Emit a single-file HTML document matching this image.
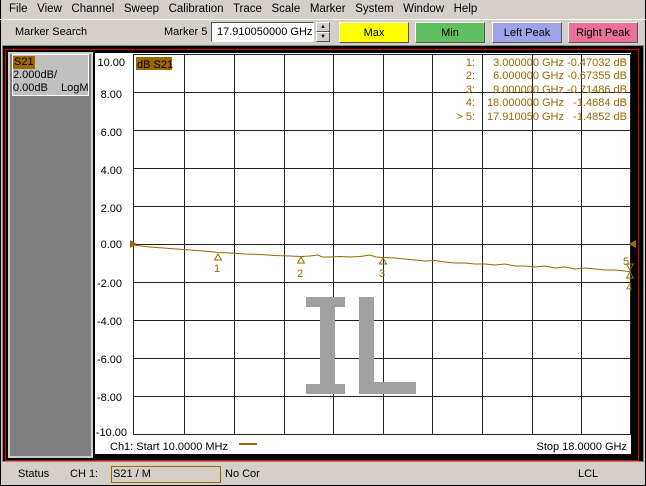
<!DOCTYPE html>
<html><head><meta charset="utf-8"><style>
*{margin:0;padding:0;box-sizing:border-box}
body{width:646px;height:486px;background:#d4d0c8;font-family:"Liberation Sans",sans-serif;font-size:11px;color:#000;position:relative;overflow:hidden}
.a{position:absolute;white-space:nowrap}
.btn{position:absolute;top:22px;height:21px;text-align:center;line-height:20px;border:1px solid;border-color:#fff #555 #555 #fff}
</style></head><body>
<div class="a" style="left:0;top:0;width:646px;height:486px;border:1px solid #000;border-top:none"></div>
<div class="a" style="top:3px;left:9px;font-size:11.5px">File&nbsp;&nbsp; View&nbsp;&nbsp; Channel&nbsp;&nbsp; Sweep&nbsp;&nbsp; Calibration&nbsp;&nbsp; Trace&nbsp;&nbsp; Scale&nbsp;&nbsp; Marker&nbsp;&nbsp; System&nbsp;&nbsp; Window&nbsp;&nbsp; Help</div>
<div class="a" style="left:0;top:19px;width:646px;height:1px;background:#fff"></div>
<div class="a" style="top:26px;left:15px">Marker Search</div>
<div class="a" style="top:26px;left:164px">Marker 5</div>
<div class="a" style="top:22px;left:211px;width:103px;height:20px;background:#fff;border:1px solid;border-color:#555 #fff #fff #555;padding:3px 0 0 5px">17.910050000 GHz</div>
<div class="a" style="top:22px;left:316px;width:14px;height:10px;border:1px solid;border-color:#fff #555 #555 #fff;font-size:6px;text-align:center;line-height:8px">▲</div>
<div class="a" style="top:32px;left:316px;width:14px;height:10px;border:1px solid;border-color:#fff #555 #555 #fff;font-size:6px;text-align:center;line-height:8px">▼</div>
<div class="btn" style="left:339px;width:70px;background:#ffff00">Max</div>
<div class="btn" style="left:415px;width:70px;background:#60c060">Min</div>
<div class="btn" style="left:492px;width:70px;background:#9ea3ec">Left Peak</div>
<div class="btn" style="left:568px;width:70px;background:#e8709a">Right Peak</div>
<div class="a" style="left:2px;top:45px;width:642px;height:417px;background:#000;border:1px solid #888"></div>
<div class="a" style="left:5px;top:49px;width:634px;height:412px;border:1px solid #e00000"></div>
<div class="a" style="left:8px;top:52px;width:85px;height:406px;background:#808080;border:2px solid #d4d0c8"></div>
<div class="a" style="left:12px;top:54px;width:77px;height:42px;background:#c0c0c0;border:1px solid #fff"></div>
<div class="a" style="left:13px;top:56px;background:#9c6600;padding:0 1px;line-height:13px">S21</div>
<div class="a" style="left:13px;top:69px;line-height:13px">2.000dB/</div>
<div class="a" style="left:13px;top:82px;line-height:13px">0.00dB</div>
<div class="a" style="left:61px;top:82px;line-height:13px">LogM</div>
<div class="a" style="left:95px;top:53px;width:536px;height:401px;background:#fff"></div>
<svg class="a" style="left:0;top:0" width="646" height="486">
<g stroke="#222" stroke-width="1" fill="none" shape-rendering="crispEdges">
<rect x="133.5" y="54.5" width="497" height="380"/>
<path d="M184.5 54v380M234.5 54v380M284.5 54v380M333.5 54v380M383.5 54v380M432.5 54v380M482.5 54v380M532.5 54v380M581.5 54v380M133 92.5h497M133 130.5h497M133 168.5h497M133 206.5h497M133 244.5h497M133 282.5h497M133 320.5h497M133 358.5h497M133 396.5h497"/>
</g>
<g fill="#a0a0a0">
<rect x="306" y="297" width="39" height="10"/><rect x="320" y="297" width="15" height="97"/><rect x="306" y="384" width="39" height="10"/>
<rect x="359" y="297" width="15" height="97"/><rect x="359" y="382" width="57" height="12"/>
</g>
<polyline fill="none" stroke="#9c6600" stroke-width="1" points="133,245 150,247 170,248.5 190,250 210,251.5 218,252.5 230,253 245,254 260,254.5 275,255.5 290,256 301,256.5 310,256 318,255 322,257 330,257 340,256.5 350,257 360,256.5 370,255 376,257 383,257.5 395,258 405,259 415,260 425,261 435,260.5 445,262 455,263 465,263 475,264 485,264 495,265 505,264 515,266 525,266 535,267 545,266 555,268 565,267 575,269 585,268 595,269 605,270 615,270 625,271 631,272"/>
<g fill="none" stroke="#9c6600">
<path d="M218 254l-3.5 6h7z M301 257l-3.5 6h7z M383 258l-3.5 6h7z M630 272l-3.5 6h7z M630 270l-3.5 -6h7z"/>
</g>
<path d="M130 240v8l7-4z M636 240v8l-7-4z" fill="#9c6600"/>
<g fill="#9c6600" font-family="Liberation Sans" font-size="11">
<text x="214" y="272">1</text><text x="297" y="277">2</text><text x="379" y="277">3</text><text x="626" y="291">4</text><text x="623" y="265">5</text>
</g>
<g font-family="Liberation Sans" font-size="11" text-anchor="end">
<text x="125" y="66">10.00</text><text x="122" y="98">8.00</text><text x="122" y="136">6.00</text><text x="122" y="174">4.00</text><text x="122" y="212">2.00</text><text x="122" y="248">0.00</text><text x="122" y="287">-2.00</text><text x="122" y="325">-4.00</text><text x="122" y="363">-6.00</text><text x="122" y="401">-8.00</text><text x="127" y="436">-10.00</text>
</g>
<g fill="#9c6600" font-family="Liberation Sans" font-size="11" text-anchor="end">
<text x="475" y="66">1:</text><text x="564" y="66">3.000000 GHz</text><text x="627" y="66">-0.47032 dB</text>
<text x="475" y="79">2:</text><text x="564" y="79">6.000000 GHz</text><text x="627" y="79">-0.67355 dB</text>
<text x="475" y="93">3:</text><text x="564" y="93">9.000000 GHz</text><text x="627" y="93">-0.71486 dB</text>
<text x="475" y="106">4:</text><text x="564" y="106">18.000000 GHz</text><text x="627" y="106">-1.4684 dB</text>
<text x="475" y="120">&gt; 5:</text><text x="564" y="120">17.910050 GHz</text><text x="627" y="120">-1.4852 dB</text>
</g>
<rect x="136" y="57" width="36" height="13" fill="#9c6600"/>
<text x="137" y="68" font-family="Liberation Sans" font-size="11">dB S21</text>
<text x="110" y="450" font-family="Liberation Sans" font-size="11">Ch1: Start  10.0000 MHz</text>
<rect x="239" y="443" width="18" height="2" fill="#9c6600"/>
<text x="627" y="450" font-family="Liberation Sans" font-size="11" text-anchor="end">Stop  18.0000 GHz</text>
</svg>
<div class="a" style="left:18px;top:468px">Status</div>
<div class="a" style="left:70px;top:468px">CH 1:</div>
<div class="a" style="left:111px;top:466px;width:110px;height:17px;border:1px solid #9c6600;padding:1px 0 0 1px">S21 / M</div>
<div class="a" style="left:225px;top:468px">No Cor</div>
<div class="a" style="left:578px;top:468px">LCL</div>
</body></html>
